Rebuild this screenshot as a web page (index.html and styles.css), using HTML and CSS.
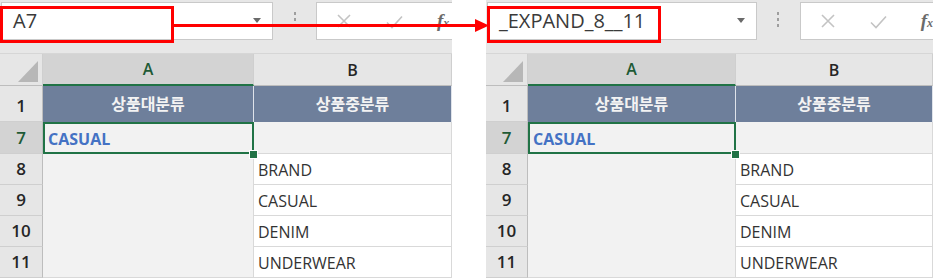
FILE: index.html
```html
<!DOCTYPE html>
<html lang="ko">
<head>
<meta charset="utf-8">
<title>Name box</title>
<link rel="stylesheet" href="styles.css">
</head>
<body>
<div class="page">
  <section class="sheet sheet--left">
    <div class="fbar">
      <div class="namebox"><span class="nb-text">A7</span><span class="nb-caret"></span></div>
      <div class="fbar-dots"><i></i><i></i><i></i></div>
      <div class="formula">
        <svg class="ic-x" width="14" height="14" viewBox="0 0 14 14"><path d="M1 1L13 13M13 1L1 13"/></svg>
        <svg class="ic-ok" width="17" height="14" viewBox="0 0 17 14"><path d="M1 7.5L6 12.5L16 1.5"/></svg>
        <span class="ic-fx">f<small>x</small></span>
      </div>
    </div>
    <div class="grid">
      <div class="corner"><svg width="43" height="32" viewBox="0 0 43 32"><polygon points="38,7 38,28 18,28"/></svg></div>
      <div class="colh colh--sel">A</div>
      <div class="colh">B</div>

      <div class="rh rh--tall">1</div>
      <div class="hd ca">상품대분류</div>
      <div class="hd cb">상품중분류</div>

      <div class="rh rh--sel">7</div>
      <div class="cell ca sel">CASUAL</div>
      <div class="cell cb grey"></div>

      <div class="rh">8</div>
      <div class="cell ca merged"></div>
      <div class="cell cb">BRAND</div>
      <div class="rh">9</div>
      <div class="cell cb">CASUAL</div>
      <div class="rh">10</div>
      <div class="cell cb">DENIM</div>
      <div class="rh">11</div>
      <div class="cell cb">UNDERWEAR</div>
    </div>
    <div class="callout"></div>
  </section>

  <section class="sheet sheet--right">
    <div class="fbar">
      <div class="namebox"><span class="nb-text">_EXPAND_8__11</span><span class="nb-caret"></span></div>
      <div class="fbar-dots"><i></i><i></i><i></i></div>
      <div class="formula">
        <svg class="ic-x" width="14" height="14" viewBox="0 0 14 14"><path d="M1 1L13 13M13 1L1 13"/></svg>
        <svg class="ic-ok" width="17" height="14" viewBox="0 0 17 14"><path d="M1 7.5L6 12.5L16 1.5"/></svg>
        <span class="ic-fx">f<small>x</small></span>
      </div>
    </div>
    <div class="grid">
      <div class="corner"><svg width="42" height="32" viewBox="0 0 42 32"><polygon points="37,7 37,28 17,28"/></svg></div>
      <div class="colh colh--sel">A</div>
      <div class="colh">B</div>

      <div class="rh rh--tall">1</div>
      <div class="hd ca">상품대분류</div>
      <div class="hd cb">상품중분류</div>

      <div class="rh rh--sel">7</div>
      <div class="cell ca sel">CASUAL</div>
      <div class="cell cb grey"></div>

      <div class="rh">8</div>
      <div class="cell ca merged"></div>
      <div class="cell cb">BRAND</div>
      <div class="rh">9</div>
      <div class="cell cb">CASUAL</div>
      <div class="rh">10</div>
      <div class="cell cb">DENIM</div>
      <div class="rh">11</div>
      <div class="cell cb">UNDERWEAR</div>
    </div>
    <div class="callout"></div>
  </section>

  <svg class="arrow" width="933" height="50" viewBox="0 0 933 50">
    <line x1="173" y1="25.5" x2="477" y2="25.5"/>
    <polygon points="475,19 489,25.5 475,32"/>
  </svg>
</div>
</body>
</html>
```

FILE: styles.css
```css
* { box-sizing: border-box; }

body {
  margin: 0;
  width: 933px;
  height: 279px;
  overflow: hidden;
  background: #ffffff;
  font-family: "Open Sans", "Noto Sans CJK KR", sans-serif;
  color: #333333;
}

.page {
  position: relative;
  display: flex;
  gap: 34px;
  height: 279px;
}

.sheet {
  position: relative;
  overflow: hidden;
  background: #ffffff;
}

.sheet--left {
  width: 452px;
  --c0: 43px;
  --ca: 211px;
  --cb: 198px;
  --nb: 272px;
}

.sheet--right {
  width: 447px;
  --c0: 42px;
  --ca: 208px;
  --cb: 197px;
  --nb: 270px;
}

/* formula bar */
.fbar {
  height: 54px;
  background: #e7e7e7;
  display: flex;
  align-items: flex-start;
  padding-top: 2px;
  border-bottom: 1px solid #d6d6d6;
}

.namebox {
  margin-left: 1px;
  width: var(--nb);
  height: 38px;
  background: #ffffff;
  border: 1px solid #c9c9c9;
  display: flex;
  align-items: center;
  padding-left: 11px;
}

.nb-text {
  flex: 1;
  font-size: 20px;
  color: #3a3a3a;
  padding-bottom: 1px;
}

.nb-caret {
  width: 0;
  height: 0;
  border-left: 4px solid transparent;
  border-right: 4px solid transparent;
  border-top: 5px solid #6a6a6a;
  margin-right: 11px;
  margin-bottom: 2px;
}

.fbar-dots {
  width: 43px;
  height: 38px;
  display: flex;
  flex-direction: column;
  align-items: center;
  justify-content: center;
  gap: 3px;
  padding-bottom: 4px;
}

.fbar-dots i {
  display: block;
  width: 2px;
  height: 3px;
  background: #9e9e9e;
}

.formula {
  flex: 1;
  height: 38px;
  background: #ffffff;
  border: 1px solid #c9c9c9;
  border-right: none;
  display: flex;
  align-items: center;
  padding-left: 20px;
}

.ic-x path,
.ic-ok path {
  fill: none;
  stroke: #c3c3c3;
  stroke-width: 1.6;
}

.ic-x { margin-right: 35px; }
.ic-ok { margin-right: 34px; margin-top: 1px; }

.ic-fx {
  font-family: "Liberation Serif", serif;
  font-style: italic;
  font-weight: bold;
  font-size: 19px;
  color: #6b6b6b;
  white-space: nowrap;
}

.ic-fx small {
  font-size: 12px;
}

/* grid */
.grid {
  display: grid;
  grid-template-columns: var(--c0) var(--ca) var(--cb);
  grid-template-rows: 32px 36px 32px 31px 31px 31px 31px;
}

.corner {
  background: #e6e6e6;
  border-right: 1px solid #cfcfcf;
  border-bottom: 1px solid #bdbdbd;
}

.corner polygon { fill: #b7b7b7; }

.colh {
  background: #e6e6e6;
  border-right: 1px solid #cfcfcf;
  border-bottom: 1px solid #bdbdbd;
  display: flex;
  align-items: center;
  justify-content: center;
  font-size: 16px;
  font-weight: 600;
  color: #262626;
}

.colh--sel {
  background: #d3d3d3;
  border-bottom: 2px solid #217346;
  color: #1e5a35;
}

.rh {
  grid-column: 1;
  background: #e6e6e6;
  border-right: 1px solid #bdbdbd;
  border-bottom: 1px solid #cfcfcf;
  display: flex;
  align-items: flex-end;
  justify-content: center;
  line-height: 30px;
  font-size: 17px;
  font-weight: 600;
  color: #262626;
}

.rh--sel {
  background: #d3d3d3;
  color: #1e5a35;
}

.ca { grid-column: 2; }
.cb { grid-column: 3; }

.hd {
  background: #6e7f9b;
  color: #f3f3f3;
  font-family: "Noto Sans CJK KR", "Open Sans", sans-serif;
  font-weight: 700;
  font-size: 16px;
  display: flex;
  align-items: center;
  justify-content: center;
  border-right: 1px solid #dfe3ea;
  padding-bottom: 3px;
}

.cell {
  background: #ffffff;
  border-right: 1px solid #d9d9d9;
  border-bottom: 1px solid #d9d9d9;
  display: flex;
  align-items: center;
  padding-left: 4px;
  padding-top: 2px;
  font-size: 16px;
  color: #333333;
}

.cell.grey { background: #f2f2f2; }

.merged {
  grid-row: span 4;
  background: #f2f2f2;
}

.sel {
  position: relative;
  background: #f2f2f2;
  color: #4472c4;
  font-weight: 700;
  padding-left: 5px;
  padding-top: 3px;
}

.sel::before {
  content: "";
  position: absolute;
  top: 0;
  left: 0;
  right: -1px;
  bottom: -1px;
  border: 2px solid #217346;
  z-index: 1;
}

.sel::after {
  content: "";
  position: absolute;
  right: -4px;
  bottom: -5px;
  width: 7px;
  height: 7px;
  background: #217346;
  outline: 1px solid #ffffff;
  z-index: 2;
}

/* annotations */
.callout {
  position: absolute;
  left: 0;
  top: 6px;
  width: 174px;
  height: 37px;
  border: 3px solid #ff0000;
  z-index: 4;
}

.sheet--right .callout { left: 1px; }

.arrow {
  position: absolute;
  left: 0;
  top: 0;
  z-index: 5;
  pointer-events: none;
}

.arrow line {
  stroke: #ff0000;
  stroke-width: 3;
}

.arrow polygon { fill: #ff0000; }
```
